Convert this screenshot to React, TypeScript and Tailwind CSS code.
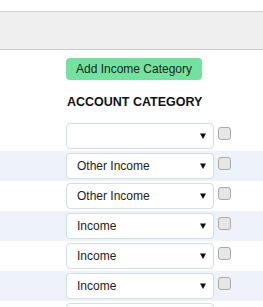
import React from "react";

const rows = ["", "Other Income", "Other Income", "Income", "Income", "Income", ""];

function Arrow() {
  return (
    <svg width="6" height="6" viewBox="0 0 6 6" className="block">
      <path d="M0 0.5 H6 L3 6 Z" fill="#111" />
    </svg>
  );
}

export default function App() {
  return (
    <div className="w-[263px] h-[307px] overflow-hidden bg-white" style={{ fontFamily: '"Liberation Sans", Arial, sans-serif' }}>
      <div className="h-[11px]" />
      <div className="h-[39px] border-y border-[#cccccc] bg-[#efefef]" />
      <div className="pl-[66px] pt-[8px]">
        <div className="w-[136px] h-[22px] rounded-[4px] bg-[#74e29f] text-[12px] leading-[22px] text-[#222] text-center">
          Add Income Category
        </div>
      </div>
      <div className="pl-[67px] pt-[14px] h-[41px] text-[12.5px] leading-[16px] font-bold text-[#111]">
        ACCOUNT CATEGORY
      </div>
      <div className="flex flex-col">
        {rows.map((r, i) => (
          <div key={i} className={`h-[30px] flex items-start shrink-0 ${i % 2 === 1 ? "bg-[#eef3fb]" : "bg-white"}`}>
            <div className="ml-[66px] mt-[2px] w-[148px] h-[26px] border border-[#d2ddeb] rounded-[4px] bg-white flex items-center pl-[10px] pr-[7px]">
              <span className="flex-1 text-[12px] text-[#222] leading-none">{r}</span>
              <Arrow />
            </div>
            <div className="ml-[4px] mt-[6px] w-[13px] h-[13px] border border-[#a9a9a9] bg-[#e6e6e6] rounded-[3px]" />
          </div>
        ))}
      </div>
    </div>
  );
}
